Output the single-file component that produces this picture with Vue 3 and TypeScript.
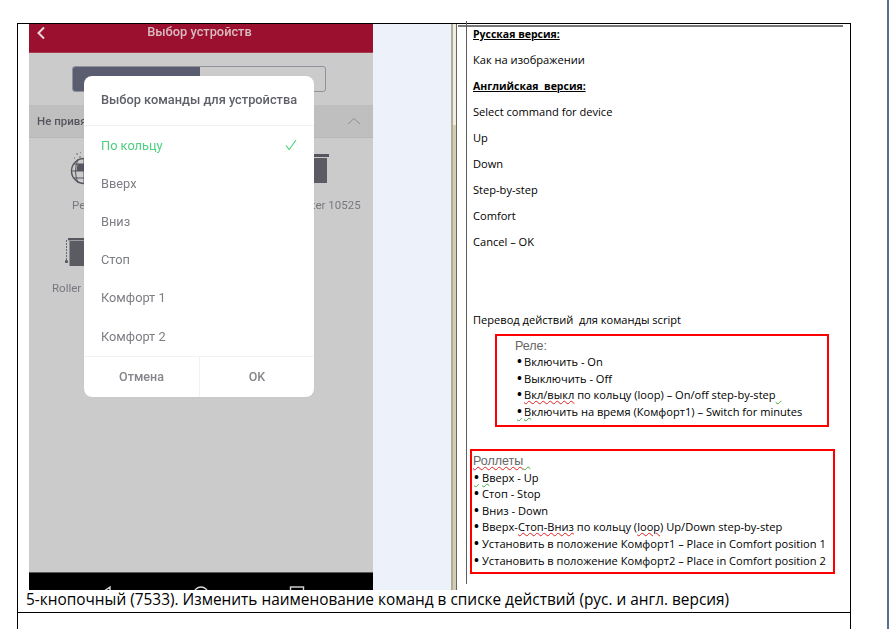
<template>
  <div class="page">
    <div class="sheet">
      <div class="row-main">
        <div class="phone">
          <div class="phone-head">
            <svg class="back" width="10" height="14" viewBox="0 0 10 14">
              <path d="M8 1.5 L2.5 7 L8 12.5" fill="none" stroke="#ecd5da" stroke-width="2" />
            </svg>
            <span class="phone-title">Выбор устройств</span>
          </div>
          <div class="phone-body">
            <div class="segment">
              <div class="segment-on"></div>
            </div>
            <div class="section">
              <span>Не привя</span>
              <svg width="14" height="8" viewBox="0 0 14 8">
                <path d="M1 7 L7 1.5 L13 7" fill="none" stroke="#8f8f8f" stroke-width="1" />
              </svg>
            </div>
            <div class="devices">
              <div class="device">
                <svg width="36" height="36" viewBox="0 0 36 36">
                  <circle cx="17" cy="19" r="12.5" fill="#cbcbcb" stroke="#55565f" stroke-width="1.4" />
                  <path d="M4.5 19 H29.5 M17 6.5 V31.5 M7 12 H27 M7 26 H27" fill="none" stroke="#55565f" stroke-width="1" />
                  <path d="M11 7 Q6 19 11 31 M23 7 Q28 19 23 31" fill="none" stroke="#55565f" stroke-width="1" />
                  <path d="M10.5 12 H17 V6 L18 6 V19 H9.5 Z M17 19 H24 V27 H17 Z" fill="#55565f" />
                  <path d="M9 2 h2 M12 5 h2 M7 6 h1 M13 0.5 h1" stroke="#8a8a8a" stroke-width="1.4" />
                </svg>
                <span class="device-name">Реле</span>
              </div>
              <div class="device"></div>
              <div class="device">
                <svg class="shutter" width="40" height="32" viewBox="0 0 40 32">
                  <rect x="1" y="2" width="39" height="3" fill="#55565f" />
                  <rect x="5" y="6" width="33" height="25" fill="#5a5b63" />
                </svg>
                <span class="device-name">Roller shutter 10525</span>
              </div>
              <div class="device">
                <svg class="shutter" width="40" height="32" viewBox="0 0 40 32">
                  <rect x="3" y="3" width="36" height="2.4" fill="#55565f" />
                  <path d="M1.5 5 V27" stroke="#66666e" stroke-width="1" stroke-dasharray="2 1" />
                  <circle cx="1.5" cy="26.5" r="1.6" fill="#55565f" />
                  <rect x="4.5" y="6" width="32" height="25" fill="#5a5b63" />
                </svg>
                <span class="device-name cut">Roller s</span>
              </div>
            </div>

            <div class="dialog">
              <div class="dialog-title">Выбор команды для устройства</div>
              <ul class="dialog-list">
                <li v-for="(item, i) in commands" :key="item" :class="{ active: i === 0 }">
                  <span>{{ item }}</span>
                  <svg v-if="i === 0" width="12" height="12" viewBox="0 0 12 12">
                    <path d="M1 6.5 L4.2 10.5 L11 1" fill="none" stroke="#4cd07d" stroke-width="1.1" />
                  </svg>
                </li>
              </ul>
              <div class="dialog-actions">
                <span>Отмена</span>
                <span>OK</span>
              </div>
            </div>
          </div>
          <div class="phone-nav">
            <svg width="16" height="16" viewBox="0 0 16 16"><path d="M13 1 L3 8 L13 15 Z" fill="none" stroke="#d8d8d8" stroke-width="1.4" /></svg>
            <svg width="16" height="16" viewBox="0 0 16 16"><circle cx="8" cy="8" r="7" fill="none" stroke="#d8d8d8" stroke-width="1.4" /></svg>
            <svg width="16" height="16" viewBox="0 0 16 16"><rect x="1.5" y="1" width="13" height="13" fill="none" stroke="#d8d8d8" stroke-width="1.4" /></svg>
          </div>
        </div>
        <div class="panel"></div>
        <div class="splitter"></div>
        <div class="doc-pane">
          <div class="doc">
            <p class="doc-line heading">Русская версия:</p>
            <p class="doc-line">Как на изображении</p>
            <p class="doc-line heading">Английская&nbsp; версия:</p>
            <p v-for="line in english" :key="line" class="doc-line">{{ line }}</p>
            <p class="doc-line script-title">Перевод действий&nbsp; для команды script</p>

            <div class="box box-relay">
              <div class="box-title">Реле:</div>
              <div class="bullet">Включить - On</div>
              <div class="bullet">Выключить - Off</div>
              <div class="bullet"><span class="typo">Вкл/выкл</span> по кольцу (loop) – On/off step-by-step<span class="grammar">&nbsp;&nbsp;</span></div>
              <div class="bullet flagged"><span class="grammar">В</span>ключить на время (Комфорт1) – Switch for minutes</div>
            </div>

            <div class="box box-shutter">
              <div class="box-title"><span class="typo">Роллеты</span><span class="grammar">&nbsp;&nbsp;</span></div>
              <div class="bullet flagged"><span class="grammar">В</span>верх - Up</div>
              <div class="bullet">Стоп - Stop</div>
              <div class="bullet">Вниз - Down</div>
              <div class="bullet">Вверх-<span class="typo">Стоп-Вниз</span> по кольцу (<span class="typo">loop</span>) Up/Down step-by-step</div>
              <div class="bullet">Установить в положение Комфорт1 – Place in Comfort position 1</div>
              <div class="bullet">Установить в положение Комфорт2 – Place in Comfort position 2</div>
            </div>
          </div>
        </div>
      </div>
      <div class="caption">5-кнопочный (7533). Изменить наименование команд в списке действий (рус. и англ. версия)</div>
    </div>
    <div class="edge"></div>
  </div>
</template>

<script setup lang="ts">
const commands: string[] = ['По кольцу', 'Вверх', 'Вниз', 'Стоп', 'Комфорт 1', 'Комфорт 2']

const english: string[] = [
  'Select command for device',
  'Up',
  'Down',
  'Step-by-step',
  'Comfort',
  'Cancel – OK',
]
</script>

<style>
html,
body {
  margin: 0;
  background: #fff;
}
</style>

<style scoped>
.page {
  display: flex;
  justify-content: space-between;
  width: 889px;
  height: 629px;
  overflow: hidden;
  background: #fff;
  font-family: "Open Sans", "Noto Sans", sans-serif;
}

.edge {
  width: 2px;
  background: #56708f;
}

.sheet {
  display: flex;
  flex-direction: column;
  box-sizing: border-box;
  width: 834px;
  margin: 23px 0 0 17px;
  border: 1px solid #000;
  border-bottom: 0;
}

.row-main {
  display: flex;
  height: 566px;
  padding-left: 11px;
}

/* phone screenshot */
.phone {
  display: flex;
  flex-direction: column;
  width: 344px;
  font-family: Roboto, "Noto Sans", sans-serif;
  filter: blur(0.35px);
}

.phone-head {
  position: relative;
  flex: none;
  height: 28px;
  padding-right: 3px;
  background: #9b102e;
  border-bottom: 1px solid #a93a52;
  text-align: center;
}

.back {
  position: absolute;
  left: 7px;
  top: 2px;
}

.phone-title {
  display: block;
  font-size: 12.8px;
  font-weight: 500;
  line-height: 16px;
  color: #d9bcc3;
}

.phone-body {
  position: relative;
  flex: 1;
  background: #cbcbcb;
  padding-top: 13px;
}

.phone-nav {
  display: flex;
  flex: none;
  justify-content: center;
  gap: 80px;
  height: 18px;
  padding-top: 13px;
  box-sizing: border-box;
  overflow: hidden;
  background: #000;
  border-top: 1px solid #5a5a5a;
}

.segment {
  width: 254px;
  height: 26px;
  margin-left: 43px;
  box-sizing: border-box;
  border: 1px solid #8f919c;
  border-radius: 3px;
  overflow: hidden;
}

.segment-on {
  width: 127px;
  height: 100%;
  background: #5a5d70;
}

.section {
  display: flex;
  justify-content: space-between;
  align-items: center;
  height: 32px;
  margin-top: 13px;
  padding: 0 12px 0 8px;
  background: #bfbfbf;
  border-bottom: 1px solid #b6b6bb;
  font-size: 11.5px;
  font-weight: 500;
  color: #55565f;
}

.devices {
  display: grid;
  grid-template-columns: repeat(3, 112px);
  padding-top: 14px;
}

.device {
  display: flex;
  flex-direction: column;
  align-items: center;
  height: 83px;
  white-space: nowrap;
}

.device svg {
  flex: none;
  height: 36px;
}

.device .shutter {
  height: 32px;
  margin-bottom: 4px;
}

.device-name {
  margin-top: 10px;
  font-size: 11.5px;
  line-height: 14px;
  color: #77787f;
}

.device-name.cut {
  align-self: flex-start;
  margin-left: 23px;
}

.dialog {
  position: absolute;
  left: 55px;
  top: 23px;
  width: 230px;
  height: 321px;
  border-radius: 8px;
  background: #fff;
  box-shadow: 0 0 1px rgba(0, 0, 0, 0.1);
  display: flex;
  flex-direction: column;
}

.dialog-title {
  flex: none;
  height: 49px;
  line-height: 47px;
  text-align: center;
  font-size: 12.8px;
  font-weight: 500;
  color: #5f6068;
  border-bottom: 1px solid #f2f2f2;
}

.dialog-list {
  flex: 1;
  margin: 0;
  padding: 0 17px;
  list-style: none;
}

.dialog-list li {
  display: flex;
  justify-content: space-between;
  align-items: center;
  height: 38.2px;
  font-size: 12.8px;
  color: #7d7e85;
}

.dialog-list li.active {
  color: #4cd07d;
}

.dialog-actions {
  display: grid;
  grid-template-columns: 115px 115px;
  flex: none;
  height: 40px;
  border-top: 1px solid #f2f2f2;
  font-size: 12.5px;
  font-weight: 500;
  line-height: 40px;
  text-align: center;
  color: #85868c;
}

.dialog-actions span + span {
  border-left: 1px solid #f2f2f2;
}

/* blue background and splitter of the word window */
.panel {
  width: 78px;
  background: #edf1f9;
}

.splitter {
  width: 7px;
  background:
    linear-gradient(#efece0, #efece0) no-repeat 2px 0 / 3px 101px,
    linear-gradient(to right, #b0ab9a 0, #b0ab9a 2px, #d4cdb4 2px, #d4cdb4 5px, #67675f 5px, #67675f 6px, #fff 6px);
}

.doc-pane {
  width: 385px;
  margin-top: 1px;
  padding-left: 8px;
  box-sizing: border-box;
  border-top: 2px solid #777;
}

.doc {
  height: 100%;
  border-left: 1px solid #5f5f5f;
  padding-left: 6px;
  color: #000;
  font-size: 11.1px;
}

.doc-line {
  margin: 0;
  height: 26px;
  line-height: 26px;
  white-space: nowrap;
}

.doc-line:first-child {
  margin-top: -6px;
}

.heading {
  font-size: 10.5px;
  font-weight: 700;
  text-decoration: underline;
}

.script-title {
  margin-top: 52px;
}

.box {
  box-sizing: border-box;
  border: 2px solid #f00;
  white-space: nowrap;
}

.box-relay {
  width: 334px;
  height: 93px;
  margin: 1px 0 0 22px;
  padding: 2px 0 0 18px;
}

.box-relay > div {
  height: 16.4px;
  line-height: 16.4px;
}

.box-shutter {
  width: 365px;
  height: 125px;
  margin: 22px 0 0 -3px;
  padding: 2px 0 0 1px;
}

.box-shutter > div {
  height: 16.6px;
  line-height: 16.6px;
}

.box-title {
  font-family: "Liberation Sans", sans-serif;
  font-size: 12.5px;
  color: #666;
}

.bullet::before {
  content: "•";
  display: inline-block;
  box-sizing: border-box;
  width: 9px;
  padding-left: 2px;
  font-size: 13px;
  line-height: 1;
  font-weight: 700;
}

.bullet.flagged::before {
  text-decoration: underline wavy #3fa63f 1px;
}

.box-shutter .bullet::before {
  padding-left: 1px;
}

.typo {
  text-decoration: underline wavy #e02020 1px;
}

.grammar {
  text-decoration: underline wavy #3fa63f 1px;
}

.caption {
  height: 22px;
  padding-left: 8px;
  line-height: 20px;
  font-size: 15.4px;
  color: #000;
  border-bottom: 1px solid #000;
  white-space: nowrap;
}
</style>
